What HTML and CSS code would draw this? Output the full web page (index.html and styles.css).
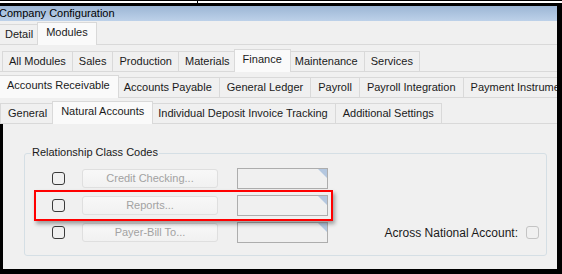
FILE: index.html
```html
<!DOCTYPE html>
<html>
<head>
<meta charset="utf-8">
<title>Company Configuration</title>
<link rel="stylesheet" href="styles.css">
</head>
<body>
<div class="desk"><span class="desk-edge"></span></div>
<div class="window">
    <div class="title-bar">Company Configuration</div>

    <div class="tabs tabs-main">
        <span class="tab">Detail</span>
        <span class="tab active">Modules</span>
    </div>

    <div class="tabs tabs-modules">
        <span class="tab">All Modules</span>
        <span class="tab">Sales</span>
        <span class="tab">Production</span>
        <span class="tab">Materials</span>
        <span class="tab active">Finance</span>
        <span class="tab">Maintenance</span>
        <span class="tab">Services</span>
    </div>

    <div class="tabs tabs-finance">
        <span class="tab active">Accounts Receivable</span>
        <span class="tab">Accounts Payable</span>
        <span class="tab">General Ledger</span>
        <span class="tab">Payroll</span>
        <span class="tab">Payroll Integration</span>
        <span class="tab">Payment Instruments</span>
    </div>

    <div class="tabs tabs-ar">
        <span class="tab">General</span>
        <span class="tab active">Natural Accounts</span>
        <span class="tab">Individual Deposit Invoice Tracking</span>
        <span class="tab">Additional Settings</span>
    </div>

    <div class="page">
        <div class="group">
            <div class="group-title">Relationship Class Codes</div>
            <div class="rows">
                <div class="row">
                    <span class="check"></span>
                    <span class="btn">Credit Checking...</span>
                    <span class="lookup"></span>
                </div>
                <div class="row">
                    <span class="check"></span>
                    <span class="btn">Reports...</span>
                    <span class="lookup"></span>
                </div>
                <div class="row">
                    <span class="check"></span>
                    <span class="btn">Payer-Bill To...</span>
                    <span class="lookup"></span>
                    <span class="across">Across National Account:</span>
                    <span class="check check-off"></span>
                </div>
                <div class="callout"></div>
            </div>
        </div>
    </div>
</div>
</body>
</html>
```

FILE: styles.css
```css
html, body {
    margin: 0;
}
body {
    background: #000;
    font: 11px "Liberation Sans", Arial, sans-serif;
    color: #1a1a1a;
}

/* strip of the window behind */
.desk {
    height: 2px;
    margin: 1px 0 3px;
    background: #fff;
}
.desk-edge {
    display: block;
    width: 1px;
    height: 2px;
    margin-left: 197px;
    background: #000;
}

.window {
    width: 557px;
    height: 263px;
    display: flex;
    flex-direction: column;
    background: #f0f0f0;
    overflow: hidden;
}
.title-bar {
    flex: 0 0 15px;
    line-height: 15px;
    text-indent: -1px;
    color: #000;
    background: linear-gradient(#9cb6d5, #bdd1e9);
}

/* tab strips */
.tabs {
    flex: 0 0 22px;
    display: flex;
    align-items: flex-end;
    border-bottom: 1px solid #d9d9d9;
}
.tabs-main {
    margin: 1px 0 0 -2px;
}
.tabs-modules {
    margin-top: 4px;
    padding-left: 2px;
}
.tabs-finance,
.tabs-ar {
    margin-top: 3px;
}
.tab {
    flex-shrink: 0;
    box-sizing: border-box;
    height: 20px;
    line-height: 18px;
    padding: 0 6px;
    margin-right: -1px;
    border: 1px solid #d9d9d9;
    border-bottom: 0;
    background: #f0f0f0;
    white-space: nowrap;
}
.tabs-finance .tab,
.tabs-ar .tab {
    padding: 0 7px;
}
.tab.active,
.tabs-finance .tab.active,
.tabs-ar .tab.active {
    position: relative;
    z-index: 1;
    height: 23px;
    padding: 0 8px;
    margin: 0 -3px -1px -2px;
    background: #fafafa;
}

/* page content */
.page {
    flex: 1 1 auto;
    border-left: 3px solid #000;
    padding: 29px 10px 0 21px;
}
.group {
    border: 1px solid #d5dfe5;
    border-radius: 3px;
    padding-bottom: 12px;
}
.group-title {
    display: table;
    margin: -8px 0 0 6px;
    padding: 0 1px;
    line-height: 13px;
    background: #f0f0f0;
}
.rows {
    position: relative;
    display: flex;
    flex-direction: column;
    gap: 6px;
    margin-top: 9px;
    padding: 0 7px 0 27px;
}
.row {
    display: flex;
    align-items: center;
    height: 21px;
}
.check {
    box-sizing: border-box;
    width: 13px;
    height: 13px;
    border: 1px solid #3a3a3a;
    border-radius: 3px;
}
.check-off {
    border-color: #c4c4c4;
}
.btn {
    box-sizing: border-box;
    width: 136px;
    height: 19px;
    margin-left: 17px;
    line-height: 17px;
    text-align: center;
    color: #a2a2a2;
    border: 1px solid #dfdfdf;
    border-radius: 3px;
    background: linear-gradient(#f8f8f8, #f1f1f1);
}
.lookup {
    position: relative;
    box-sizing: border-box;
    width: 91px;
    height: 21px;
    margin-left: 19px;
    border: 1px solid #adadad;
}
.lookup::after {
    content: "";
    position: absolute;
    top: 0;
    right: 0;
    border-top: 9px solid #b4c7df;
    border-left: 9px solid transparent;
}
.across {
    margin: 0 8px 0 auto;
    font-size: 12px;
}

/* red highlight drawn over the second row */
.callout {
    position: absolute;
    left: 9px;
    top: 22px;
    box-sizing: border-box;
    width: 299px;
    height: 31px;
    border: 2px solid #f00;
    box-shadow: 2px 3px 4px rgba(0, 0, 0, 0.35);
}
```
